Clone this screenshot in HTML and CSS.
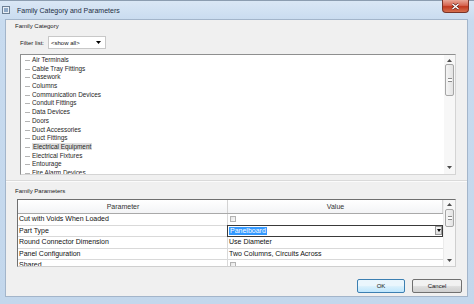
FILE: index.html
```html
<!DOCTYPE html>
<html lang="en">
<head>
    <meta charset="UTF-8">
    <meta name="viewport" content="width=device-width, initial-scale=1.0">
    <title>Family Category and Parameters</title>
    <link rel="stylesheet" href="styles.css">
</head>
<body>
    <div class="window">
        <div class="titlebar">
            <svg class="app-icon" width="8" height="8" viewBox="0 0 8 8">
                <rect x="0.5" y="0.5" width="7" height="7" fill="#e8eef5" stroke="#6d7f93"/>
                <rect x="2" y="2" width="4" height="4" fill="#8fa9c6"/>
            </svg>
            <span class="title">Family Category and Parameters</span>
            <button class="close-btn">
                <svg width="9" height="7" viewBox="0 0 9 7">
                    <path d="M1.5 1 L7.5 6 M7.5 1 L1.5 6" stroke="#5a1a12" stroke-width="2.6"/>
                    <path d="M1.5 1 L7.5 6 M7.5 1 L1.5 6" stroke="#fff" stroke-width="1.5"/>
                </svg>
            </button>
        </div>

        <div class="client">
            <div class="group category">
                <div class="group-label">Family Category</div>
                <div class="filter-row">
                    <span class="filter-label">Filter list:</span>
                    <div class="select">
                        <span>&lt;show all&gt;</span>
                        <svg class="arrow" width="5" height="3" viewBox="0 0 5 3"><path d="M0 0 H5 L2.5 3 Z" fill="#000"/></svg>
                    </div>
                </div>
                <div class="listbox">
                    <ul class="tree">
                        <li>Air Terminals</li>
                        <li>Cable Tray Fittings</li>
                        <li>Casework</li>
                        <li>Columns</li>
                        <li>Communication Devices</li>
                        <li>Conduit Fittings</li>
                        <li>Data Devices</li>
                        <li>Doors</li>
                        <li>Duct Accessories</li>
                        <li>Duct Fittings</li>
                        <li><span class="current">Electrical Equipment</span></li>
                        <li>Electrical Fixtures</li>
                        <li>Entourage</li>
                        <li>Fire Alarm Devices</li>
                    </ul>
                    <div class="vscroll tree-scroll">
                        <svg class="sc-arrow" width="5" height="3" viewBox="0 0 5 3"><path d="M0 3 H5 L2.5 0 Z" fill="#4d4d4d"/></svg>
                        <div class="thumb tall"><span class="grip"></span></div>
                        <svg class="sc-arrow down" width="5" height="3" viewBox="0 0 5 3"><path d="M0 0 H5 L2.5 3 Z" fill="#4d4d4d"/></svg>
                    </div>
                </div>
            </div>

            <div class="group params">
                <div class="group-label">Family Parameters</div>
                <div class="grid">
                    <div class="grid-main">
                        <div class="grid-head">
                            <div class="cell">Parameter</div>
                            <div class="cell">Value</div>
                        </div>
                        <div class="grid-row">
                            <div class="cell">Cut with Voids When Loaded</div>
                            <div class="cell"><span class="checkbox"></span></div>
                        </div>
                        <div class="grid-row">
                            <div class="cell">Part Type</div>
                            <div class="cell combo">
                                <span class="sel">Panelboard</span>
                                <span class="drop"><svg width="4" height="3" viewBox="0 0 4 3"><path d="M0 0 H4 L2 3 Z" fill="#000"/></svg></span>
                            </div>
                        </div>
                        <div class="grid-row">
                            <div class="cell">Round Connector Dimension</div>
                            <div class="cell">Use Diameter</div>
                        </div>
                        <div class="grid-row">
                            <div class="cell">Panel Configuration</div>
                            <div class="cell">Two Columns, Circuits Across</div>
                        </div>
                        <div class="grid-row">
                            <div class="cell">Shared</div>
                            <div class="cell"><span class="checkbox"></span></div>
                        </div>
                    </div>
                    <div class="vscroll grid-scroll">
                        <svg class="sc-arrow" width="5" height="3" viewBox="0 0 5 3"><path d="M0 3 H5 L2.5 0 Z" fill="#4d4d4d"/></svg>
                        <div class="thumb short"><span class="grip"></span></div>
                        <svg class="sc-arrow down" width="5" height="3" viewBox="0 0 5 3"><path d="M0 0 H5 L2.5 3 Z" fill="#4d4d4d"/></svg>
                    </div>
                </div>
            </div>

            <div class="buttons">
                <button class="btn ok-btn">OK</button>
                <button class="btn cancel-btn">Cancel</button>
            </div>
        </div>
    </div>
</body>
</html>
```

FILE: styles.css
```css
* {
    box-sizing: border-box;
}
body {
    margin: 0;
    width: 474px;
    height: 304px;
    overflow: hidden;
    font-family: "Liberation Sans", Arial, sans-serif;
    background: #c5d8ec;
}
.window {
    height: 304px;
    display: flex;
    flex-direction: column;
    border-top: 1px solid #8c9db0;
    background: linear-gradient(#dae7f5, #c8dbef 20px, #c3d7ec);
    padding-bottom: 7px;
}
.titlebar {
    height: 18px;
    display: flex;
    align-items: flex-start;
    padding-left: 2px;
}
.app-icon {
    margin-top: 5px;
}
.title {
    font-size: 7px;
    margin: 6px 0 0 7px;
    color: #1e2f44;
}
.close-btn {
    margin-left: auto;
    margin-right: 5px;
    margin-top: -1px;
    width: 27px;
    height: 13px;
    padding: 0;
    display: flex;
    align-items: center;
    justify-content: center;
    border: 1px solid #7a3327;
    border-top: none;
    border-radius: 0 0 4px 4px;
    background: linear-gradient(#e9a797, #d76550 45%, #c2391f 55%, #d6704f);
}
.client {
    flex: 1;
    margin: 0 6px 0 5px;
    background: #f0f0f0;
    border: 1px solid #a3b5ca;
    display: flex;
    flex-direction: column;
}
.group-label {
    font-size: 6px;
    line-height: 8px;
    height: 8px;
    color: #1a1a1a;
}
.category {
    padding: 2px 0 5px 9px;
    border-bottom: 1px solid #dadada;
    box-shadow: 0 1px 0 #fbfbfb;
}
.filter-row {
    display: flex;
    align-items: center;
    margin: 6px 0 0 5px;
    height: 13px;
}
.filter-label {
    font-size: 6px;
    color: #1a1a1a;
    width: 28px;
}
.select {
    width: 58px;
    height: 13px;
    display: flex;
    align-items: center;
    justify-content: space-between;
    padding: 0 4px 0 2px;
    background: #fff;
    border: 1px solid #c8c8c8;
    font-size: 6px;
    color: #111;
}
.listbox {
    display: flex;
    margin: 5px 0 0 5px;
    width: 436px;
    height: 121px;
    background: #fff;
    border: 1px solid #8e8f8f;
    border-right-color: #d4d4d4;
    border-bottom-color: #d4d4d4;
}
.tree {
    flex: 1;
    margin: 0;
    padding: 1px 0 0 0;
    list-style: none;
    overflow: hidden;
}
.tree li {
    position: relative;
    height: 8.7px;
    line-height: 8.7px;
    font-size: 6.4px;
    color: #262626;
    padding-left: 11px;
    white-space: nowrap;
}
.tree li::before {
    content: "";
    position: absolute;
    left: 4px;
    top: 4px;
    width: 5px;
    border-top: 1px solid #b4b4b4;
}
.current {
    background: #dedede;
    padding: 0 1px;
}
.vscroll {
    width: 11px;
    display: flex;
    flex-direction: column;
    align-items: center;
    background: #f7f7f7;
}
.sc-arrow {
    flex: none;
}
.tree-scroll {
    padding: 4px 0 5px;
}
.tree-scroll .thumb {
    margin-top: 2px;
}
.thumb {
    width: 9px;
    display: flex;
    align-items: center;
    justify-content: center;
    border: 1px solid #a6a6a6;
    border-radius: 2px;
    background: linear-gradient(90deg, #f4f4f4, #e4e4e4);
}
.thumb.tall {
    height: 32px;
}
.thumb.short {
    height: 18px;
    margin-top: 3px;
}
.grip {
    width: 4px;
    height: 4px;
    border-top: 1px solid #8c8c8c;
    border-bottom: 1px solid #8c8c8c;
    background: linear-gradient(#fff 33%, #8c8c8c 33%, #8c8c8c 66%, #fff 66%);
}
.down {
    margin-top: auto;
}
.params {
    padding: 6px 0 0 9px;
}
.grid {
    display: flex;
    margin: 4px 0 0 2px;
    width: 439px;
    height: 68px;
    background: #fff;
    border: 1px solid #6f6f6f;
    border-right-color: #cfcfcf;
    border-bottom-color: #cfcfcf;
    overflow: hidden;
}
.grid-main {
    flex: 1;
    overflow: hidden;
}
.grid-head,
.grid-row {
    display: grid;
    grid-template-columns: 210px 1fr;
}
.grid-head {
    height: 14px;
    background: linear-gradient(#ffffff, #f3f4f6);
    border-bottom: 1px solid #a9a9a9;
}
.grid-head .cell {
    text-align: center;
    line-height: 13px;
    font-size: 7px;
    color: #333;
    border-right: 1px solid #d3d3d3;
}
.grid-row {
    height: 11.5px;
    border-bottom: 1px solid #d9d9d9;
}
.cell {
    font-size: 7px;
    line-height: 10.5px;
    color: #111;
    padding-left: 1px;
    white-space: nowrap;
    overflow: hidden;
}
.grid-row .cell:first-child {
    border-right: 1px solid #d9d9d9;
}
.checkbox {
    display: inline-block;
    width: 6px;
    height: 6px;
    margin: 2px 0 0 1px;
    border: 1px solid #b3b3b3;
    background: linear-gradient(135deg, #e6e6e6, #fafafa);
    vertical-align: top;
}
.combo {
    display: flex;
    align-items: center;
    border: 1px solid #3a3a3a;
    margin: -1px 0 -1px -1px;
    padding-left: 1px;
}
.sel {
    background: #3399ff;
    color: #fff;
    line-height: 8px;
    padding: 0 1px;
}
.drop {
    margin-left: auto;
    width: 7px;
    height: 9px;
    display: flex;
    align-items: center;
    justify-content: center;
    border: 1px solid #9a9a9a;
    background: linear-gradient(#f6f6f6, #dcdcdc);
}
.grid-scroll {
    width: 12px;
    padding: 3px 0 4px;
    border-left: 1px solid #ececec;
}
.buttons {
    margin-top: auto;
    display: flex;
    justify-content: flex-end;
    gap: 7px;
    padding: 0 5px 3px 0;
}
.btn {
    height: 14px;
    padding: 0;
    font-family: "Liberation Sans", Arial, sans-serif;
    font-size: 6px;
    color: #111;
    border: 1px solid #707070;
    border-radius: 2px;
    background: linear-gradient(#f2f2f2 45%, #dedede 55%, #cfcfcf);
}
.ok-btn {
    width: 48px;
    border-color: #3c7fb1;
    background: linear-gradient(#eaf6fd 45%, #d9f0fc 55%, #bee6fd);
}
.cancel-btn {
    width: 50px;
}
```
